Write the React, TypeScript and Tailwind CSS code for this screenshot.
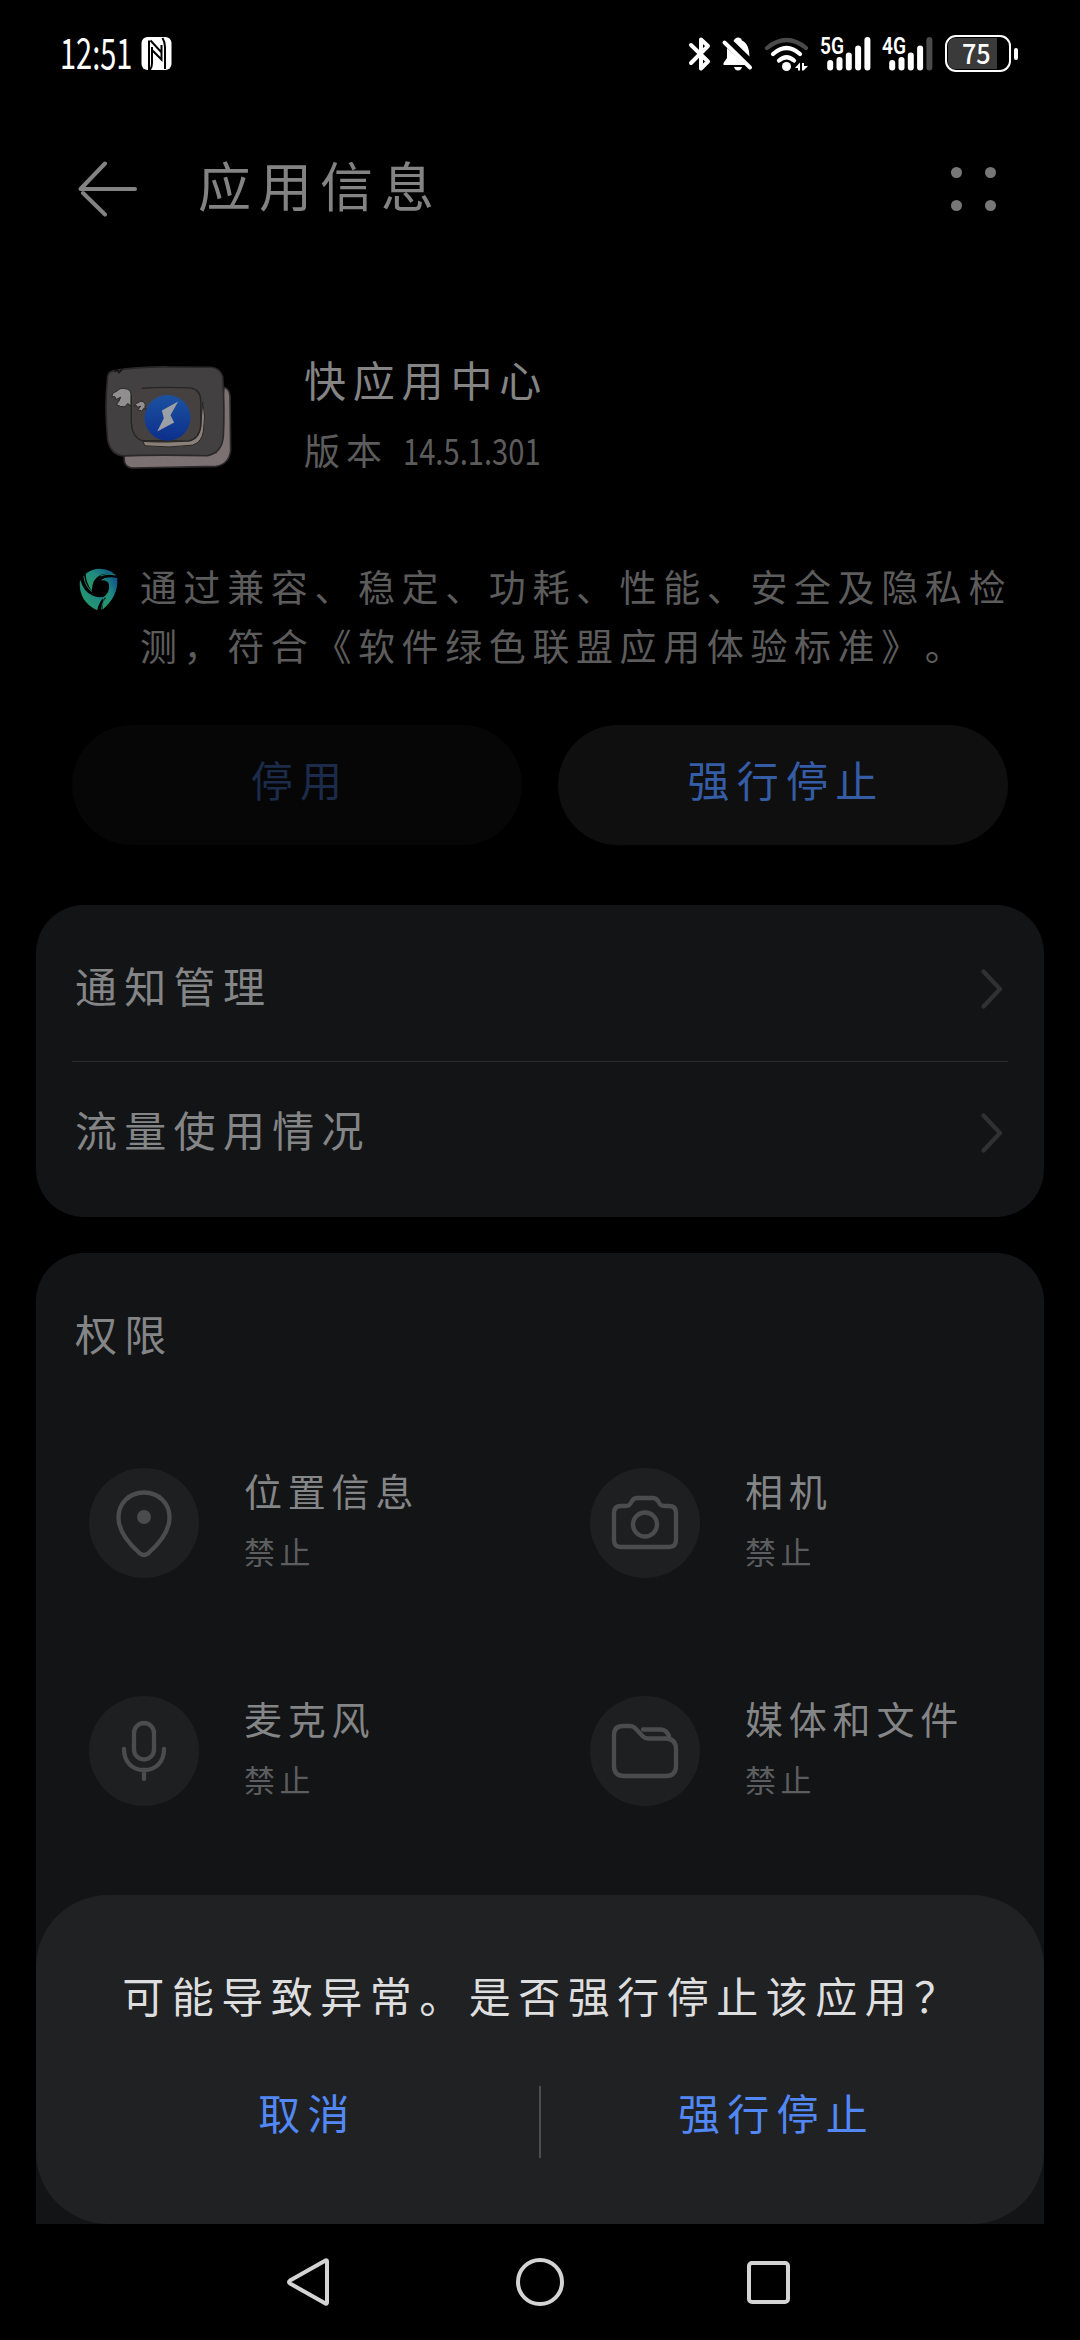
import type { ReactNode } from "react";

interface Permission {
  name: string;
  status: string;
  icon: ReactNode;
}

const iconStroke = {
  fill: "none",
  stroke: "#4b4c4e",
  strokeWidth: 4.3,
  strokeLinecap: "round" as const,
  strokeLinejoin: "round" as const,
};

const permissions: Permission[] = [
  {
    name: "位置信息",
    status: "禁止",
    icon: (
      <svg viewBox="0 0 110 110" className="size-[110px]" {...iconStroke}>
        <path d="M55 24.500C40 24.500 29.500 35.500 29.500 49.500C29.500 62 39 75 51 85.500Q55 88.500 59 85.500C71 75 80.500 62 80.500 49.500C80.500 35.500 70 24.500 55 24.500Z" />
        <circle cx="55" cy="49" r="7" fill="#4b4c4e" stroke="none" />
      </svg>
    ),
  },
  {
    name: "相机",
    status: "禁止",
    icon: (
      <svg viewBox="0 0 110 110" className="size-[110px]" {...iconStroke}>
        <path d="M24 45Q24 38 31 38H36Q39 38 40.500 35.500L42 33Q44 30 47 30H63Q66 30 68 33L69.500 35.500Q71 38 74 38H79Q86 38 86 45V72Q86 79 79 79H31Q24 79 24 72Z" />
        <circle cx="55" cy="56.500" r="12" />
      </svg>
    ),
  },
  {
    name: "麦克风",
    status: "禁止",
    icon: (
      <svg viewBox="0 0 110 110" className="size-[110px]" {...iconStroke}>
        <rect x="45" y="27" width="20" height="36.500" rx="10" />
        <path d="M35 53C35 66 43 74 55 74S75 66 75 53M55 74V83" />
      </svg>
    ),
  },
  {
    name: "媒体和文件",
    status: "禁止",
    icon: (
      <svg viewBox="0 0 110 110" className="size-[110px]" {...iconStroke}>
        <path d="M24 39Q24 30 33 30H40Q43 30 45 32L53 40.500Q55 42.500 58 42.500H76Q86 43 86 53V70Q86 80 76 80H34Q24 80 24 70Z" />
        <path d="M53 33.500H71Q78 34 79.500 42.500" />
      </svg>
    ),
  },
];

function SignalBars({ label, level }: { label: string; level: number }) {
  const tops = [24, 21, 16.5, 9.5, 1];
  return (
    <svg viewBox="0 -12 51 48" className="-mt-3 h-12 w-[51px]">
      <text x="0" y="18" textLength="24" lengthAdjust="spacingAndGlyphs" fill="#fff" className="font-['Roboto'] text-[24px] font-semibold">
        {label}
      </text>
      {tops.map((top, i) => (
        <rect key={top} x={7.2 + i * 9.3} y={top} width="6" height={34.5 - top} rx="3" fill={i < level ? "#fff" : "#4a4a4a"} />
      ))}
    </svg>
  );
}

function StatusBar() {
  return (
    <div className="flex h-[107px] items-center pr-[62px] pl-[60px] text-white">
      <div className="w-[70px] pb-1">
        <span className="inline-block origin-left scale-x-[.69] text-[42px] leading-none">12:51</span>
      </div>
      {/* NFC */}
      <svg viewBox="0 0 30 33" className="ml-[11px] h-[33px] w-[31px]">
        <rect width="30" height="33" rx="6" fill="#fff" />
        <path d="M7.500 3.500V33M10.500 10V26Q10.500 31 8 33M9 3.500L20 15.500V8M10.500 13L20 22.500V15M21 1Q23.500 5 23.500 10V32" fill="none" stroke="#000" strokeWidth="2" />
      </svg>
      <div className="ml-auto flex items-center">
        <svg viewBox="0 0 24 36" className="h-9 w-6" fill="none" stroke="#fff" strokeWidth="4" strokeLinecap="round" strokeLinejoin="round">
          <path d="M3 9L20 25.500L13 32.500V3.500L20 10L3 27" />
        </svg>
        {/* Muted bell */}
        <svg viewBox="0 0 32 36" className="ml-[9px] h-9 w-8">
          <path d="M6 12V22L2.500 27V29H24.500Z" fill="#fff" />
          <path d="M12.500 5Q14 1.500 17 1.500Q20 1.500 21 4.500C26 7 28 11 28.500 20.500Z" fill="#fff" />
          <path d="M13 31H21Q20 34.500 17 34.500T13 31Z" fill="#fff" />
          <path d="M3.500 6.500L29 31.500" stroke="#fff" strokeWidth="4" strokeLinecap="round" />
        </svg>
        {/* Wi-Fi with traffic arrows */}
        <svg viewBox="0 0 46 36" className="ml-[11px] h-9 w-[46px]" fill="none" strokeWidth="4.200" strokeLinecap="round">
          <path d="M3 12Q22.500-4 42 12" stroke="#4a4a4a" />
          <path d="M9 18Q22.500 6 36 18" stroke="#fff" />
          <path d="M15 24.500Q22.500 18 30 24.500" stroke="#fff" />
          <circle cx="22.500" cy="30.500" r="4.500" fill="#fff" />
          <path d="M31 32L36 26.500V34.500H34V32ZM38 27H40V30H44L39.500 34.500H38Z" fill="#fff" />
        </svg>
        <div className="ml-[10px] flex gap-[11px]">
          <SignalBars label="5G" level={5} />
          <SignalBars label="4G" level={4} />
        </div>
        <div className="ml-[12px] flex items-center gap-[3px]">
          <div className="h-[37px] w-[66px] rounded-[11px] border-[2.500px] border-white p-px">
            <div className="flex h-full w-[49px] items-center rounded-l-[7px] bg-[#3a3a3a] pb-1 pl-[14px]">
              <span className="origin-left scale-x-[.9] text-[28px] leading-none font-medium">75</span>
            </div>
          </div>
          <div className="h-3 w-1 rounded-full bg-white" />
        </div>
      </div>
    </div>
  );
}

function AppIcon() {
  return (
    <svg viewBox="100 25 400 320" className="h-[107px] w-[133px]">
      <defs>
        <linearGradient id="bolt-bg" x1="0" y1="0" x2="0" y2="1">
          <stop offset="0" stopColor="#1c52a0" />
          <stop offset="1" stopColor="#0c2f8c" />
        </linearGradient>
      </defs>
      <path d="M164 300Q160 336 190 337L440 332Q478 326 484 285L482 120Q480 98 464 94L440 290Z" fill="#7c7172" stroke="#2c292a" strokeWidth="5" />
      <path d="M114 62Q116 46 136 44Q200 32 300 33L424 34Q452 36 460 62Q466 160 462 240Q458 292 414 300Q280 296 160 300Q124 298 114 252Q104 150 114 62Z" fill="#434041" stroke="#2a2829" strokeWidth="5" />
      <path d="M136 48L142 41L148 50L158 40" fill="none" stroke="#111" strokeWidth="4" />
      <path d="M400 138Q410 180 402 226Q398 258 370 268Q300 278 226 270L220 257Q300 262 362 254Q390 246 394 210Z" fill="#8a8077" stroke="#292627" strokeWidth="3" />
      <path d="M218 97Q280 92 362 96Q394 100 394 136V210Q390 250 356 256L216 254Q188 244 185 200V120" fill="#454141" stroke="#262425" strokeWidth="4" strokeLinecap="round" />
      <circle cx="294" cy="186" r="69" fill="url(#bolt-bg)" />
      <path d="M326 137L277 164L283 187L263 227L314 200L303 178Z" fill="#9d9fa6" />
      <path d="M126 121Q128 108 142 106Q150 95 165 98Q184 100 184 115V150L174 143L166 153Q152 154 140 146Q150 136 153 124L140 131L136 123Z" fill="#908e8e" stroke="#262425" strokeWidth="3" />
      <path d="M194 151Q198 140 207 140Q214 132 222 138Q230 144 226 156L231 160L222 158L217 166L205 162L213 151L204 155L201 149Z" fill="#908e8e" stroke="#262425" strokeWidth="3" />
    </svg>
  );
}

function GreenAllianceIcon() {
  return (
    <svg viewBox="25 637 125 137" className="mt-[7px] h-[46px] w-[42px] shrink-0">
      <defs>
        <linearGradient id="alliance" x1="0" y1="1" x2="1" y2="0">
          <stop offset="0.150" stopColor="#2a9a68" />
          <stop offset="0.550" stopColor="#1f8a80" />
          <stop offset="0.950" stopColor="#0d508a" />
        </linearGradient>
      </defs>
      <g fill="url(#alliance)">
        <path d="M48 657Q82 631 126 651L136 662Q112 653 92 661Q68 671 66 707Q48 684 48 657Z" />
        <path d="M142 670Q146 724 98 764Q102 742 98 730Q122 712 117 688Q112 674 92 677Q112 662 142 670Z" />
        <path d="M32 676Q42 712 68 722Q86 731 106 724Q88 738 82 766Q28 742 30 682Z" />
      </g>
      <path d="M96 668Q116 660 144 666M36 666Q44 706 72 720M107 728Q94 742 88 768" fill="none" stroke="#000" strokeWidth="3" />
      <path d="M42 663Q46 694 66 710M92 664Q112 655 137 661M104 734Q96 748 95 763" fill="none" stroke="#1c7a70" strokeWidth="3" />
    </svg>
  );
}

function SettingRow({ label }: { label: string }) {
  return (
    <div className="flex h-36 items-center justify-between pr-[5px] pl-[3px]">
      <span className="pb-[9px] text-[42px] leading-none tracking-[7.300px] text-[#848586]">{label}</span>
      <svg viewBox="0 0 22 40" className="h-10 w-[22px]" fill="none" stroke="#303133" strokeWidth="4.200" strokeLinecap="round" strokeLinejoin="round">
        <path d="M2.500 2.500L19 20L2.500 37.500" />
      </svg>
    </div>
  );
}

function PermissionItem({ name, status, icon }: Permission) {
  return (
    <div className="flex h-[124px] items-center">
      <div className="size-[110px] rounded-full bg-[#1e1f21]">{icon}</div>
      <div className="ml-[45px] flex flex-col">
        <span className="flex h-[62px] items-center pb-1 text-[38px] leading-none tracking-[5.800px] text-[#848586]">{name}</span>
        <span className="flex h-[62px] items-center pb-2 text-[31px] leading-none tracking-[4.500px] text-[#5c5d5f]">{status}</span>
      </div>
    </div>
  );
}

export default function App() {
  return (
    <div className="relative flex h-[2340px] w-[1080px] flex-col overflow-hidden bg-black font-['Noto_Sans_CJK_SC',sans-serif] font-normal [text-spacing-trim:space-all]">
      <StatusBar />

      {/* Title bar */}
      <div className="flex h-[163px] items-center pr-[84px] pl-[78px]">
        <svg viewBox="0 0 60 56" className="h-14 w-[60px]" fill="none" stroke="#838383" strokeWidth="4" strokeLinecap="round" strokeLinejoin="round">
          <path d="M57 28H2.500L27 2.500M5 32L27 53.500" />
        </svg>
        <h1 className="ml-[60px] pb-[9px] text-[53px] leading-none tracking-[8px] text-[#838383]">应用信息</h1>
        <div className="ml-auto grid grid-cols-2 gap-x-[23px] gap-y-[22px]">
          {[0, 1, 2, 3].map((dot) => (
            <span key={dot} className="size-[11px] rounded-full bg-[#777777]" />
          ))}
        </div>
      </div>

      {/* App summary */}
      <div className="mt-[77px] flex h-[140px] items-center pl-[103px]">
        <AppIcon />
        <div className="ml-[68px]">
          <p className="flex h-[70px] items-center pb-1.5 text-[42px] leading-none tracking-[6.800px] text-[#848484]">快应用中心</p>
          <p className="flex h-[70px] items-center pb-1.5 text-[36px] leading-none text-[#5c5c5c]">
            <span className="tracking-[6px]">版本</span>
            <span className="ml-[15px] origin-left scale-x-[.81]">14.5.1.301</span>
          </p>
        </div>
      </div>

      <div className="mt-[73px] flex h-[118px] pl-[78px]">
        <GreenAllianceIcon />
        <p className="-mt-[3px] ml-[20px] text-[37px] leading-[59px] tracking-[6.600px] whitespace-nowrap text-[#5c5c5c]">
          通过兼容、稳定、功耗、性能、安全及隐私检
          <br />
          测，符合《软件绿色联盟应用体验标准》。
        </p>
      </div>

      <div className="mt-[47px] grid h-[120px] grid-cols-2 gap-9 px-[72px] text-[42px] leading-none tracking-[7.300px]">
        <button className="rounded-full bg-[#060606] pb-3 pl-1.5 text-[#1b2b49]">停用</button>
        <button className="rounded-full bg-[#0f0f0f] pb-3 pl-1.5 text-[#355da6]">强行停止</button>
      </div>

      {/* Settings links */}
      <div className="mx-9 mt-[60px] h-[312px] rounded-[48px] bg-[#131416] px-9 py-3">
        <SettingRow label="通知管理" />
        <div className="-mb-px h-px bg-[#2b2c2d]" />
        <SettingRow label="流量使用情况" />
      </div>

      {/* Permissions */}
      <div className="mx-9 mt-9 flex-1 rounded-t-[48px] bg-[#131416] pt-[53px]">
        <h2 className="flex h-[60px] items-center pb-1.5 pl-[39px] text-[42px] leading-none tracking-[7.300px] text-[#848586]">权限</h2>
        <div className="mt-[95px] grid grid-cols-[501px_455px] gap-y-[104px] pl-[53px]">
          {permissions.map((permission) => (
            <PermissionItem key={permission.name} {...permission} />
          ))}
        </div>
      </div>

      {/* Navigation bar */}
      <div className="flex h-[116px] items-center justify-center gap-[183px]">
        <svg viewBox="0 0 48 48" className="h-12 w-12" fill="none" stroke="#d4d4d4" strokeWidth="4" strokeLinejoin="round">
          <path d="M42 3.500V44.500Q42 46 40.500 45.500L5 25.500Q3 24 5 22.500L40.500 2.500Q42 2 42 3.500Z" />
        </svg>
        <div className="size-12 rounded-full border-4 border-[#d4d4d4]" />
        <div className="flex size-12 items-center">
          <div className="size-[43px] rounded-[5px] border-4 border-[#d4d4d4]" />
        </div>
      </div>

      {/* Confirm sheet */}
      <div className="absolute inset-x-9 bottom-[116px] h-[329px] rounded-[72px] bg-[#202123] px-9">
        <p className="mt-[65px] flex h-[70px] items-center justify-center pl-1.5 text-[42px] leading-none tracking-[7.500px] whitespace-nowrap text-[#dededf]">
          可能导致异常。是否强行停止该应用？
        </p>
        <div className="mt-[56px] flex h-[72px] items-center text-[42px] leading-none tracking-[7.300px] text-[#5288f5]">
          <button className="flex-1 pb-5 pl-1">取消</button>
          <div className="h-[72px] w-0.5 bg-[#4c4d4e]" />
          <button className="flex-1 pb-5 pl-1">强行停止</button>
        </div>
      </div>
    </div>
  );
}
